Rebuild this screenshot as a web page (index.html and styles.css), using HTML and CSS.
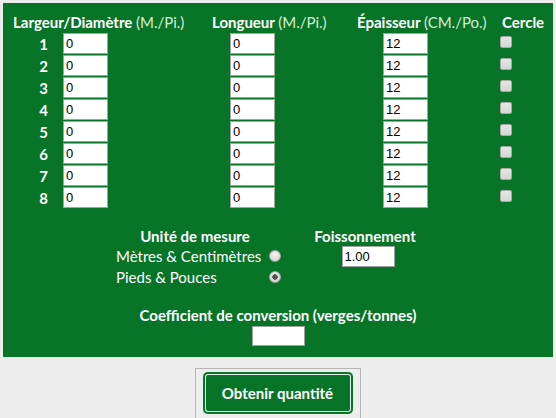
FILE: index.html
```html
<!DOCTYPE html>
<html lang="fr">
<head>
<meta charset="utf-8">
<title>Calcul de quantité</title>
<link rel="stylesheet" href="styles.css">
</head>
<body>
<div class="panel">
  <div class="dims">
    <div class="h h1">Largeur/Diamètre <span class="unit">(M./Pi.)</span></div>
    <div class="h h2">Longueur <span class="unit">(M./Pi.)</span></div>
    <div class="h h3">Épaisseur <span class="unit">(CM./Po.)</span></div>
    <div class="h h4">Cercle</div>

    <div class="num">1</div><div class="c1"><input class="field" value="0"></div><div class="c2"><input class="field" value="0"></div><div class="c3"><input class="field" value="12"></div><div class="c4"><input type="checkbox" class="box"></div>
    <div class="num">2</div><div class="c1"><input class="field" value="0"></div><div class="c2"><input class="field" value="0"></div><div class="c3"><input class="field" value="12"></div><div class="c4"><input type="checkbox" class="box"></div>
    <div class="num">3</div><div class="c1"><input class="field" value="0"></div><div class="c2"><input class="field" value="0"></div><div class="c3"><input class="field" value="12"></div><div class="c4"><input type="checkbox" class="box"></div>
    <div class="num">4</div><div class="c1"><input class="field" value="0"></div><div class="c2"><input class="field" value="0"></div><div class="c3"><input class="field" value="12"></div><div class="c4"><input type="checkbox" class="box"></div>
    <div class="num">5</div><div class="c1"><input class="field" value="0"></div><div class="c2"><input class="field" value="0"></div><div class="c3"><input class="field" value="12"></div><div class="c4"><input type="checkbox" class="box"></div>
    <div class="num">6</div><div class="c1"><input class="field" value="0"></div><div class="c2"><input class="field" value="0"></div><div class="c3"><input class="field" value="12"></div><div class="c4"><input type="checkbox" class="box"></div>
    <div class="num">7</div><div class="c1"><input class="field" value="0"></div><div class="c2"><input class="field" value="0"></div><div class="c3"><input class="field" value="12"></div><div class="c4"><input type="checkbox" class="box"></div>
    <div class="num">8</div><div class="c1"><input class="field" value="0"></div><div class="c2"><input class="field" value="0"></div><div class="c3"><input class="field" value="12"></div><div class="c4"><input type="checkbox" class="box"></div>
  </div>

  <div class="units">
    <div class="uh uh-left">Unité de mesure</div>
    <div class="uh uh-right">Foissonnement</div>
    <div class="opt">Mètres &amp; Centimètres</div>
    <div class="rad"><input type="radio" name="unit" class="radio"></div>
    <div class="fois"><input class="field wide" value="1.00"></div>
    <div class="opt">Pieds &amp; Pouces</div>
    <div class="rad"><input type="radio" name="unit" class="radio" checked></div>
  </div>

  <div class="coef">
    <div class="coef-title">Coefficient de conversion (verges/tonnes)</div>
    <input class="field wide coef-input" value="">
  </div>
</div>

<div class="actions">
  <div class="btn-frame">
    <button class="btn" type="button">Obtenir quantité</button>
  </div>
</div>
</body>
</html>
```

FILE: styles.css
```css
html, body {
  margin: 0;
  padding: 0;
  background: #ededed;
}

body {
  font-family: "Lato", "Open Sans", sans-serif;
  color: #fff;
}

.panel {
  margin: 3px 3px 0 3px;
  background: #077428;
  padding: 9px 0 11px 10px;
}

.dims {
  display: grid;
  grid-template-columns: 48px 151px 145px 140px 56px;
  grid-auto-rows: 22px;
  grid-template-rows: 21px;
}

.h {
  font-size: 15px;
  font-weight: 700;
  line-height: 21px;
  white-space: nowrap;
}

.unit {
  font-weight: 400;
  color: #d6eed6;
}

.h1 { grid-column: 1 / 3; }
.h2 { grid-column: 3; }
.h3 { grid-column: 4; }
.h4 { grid-column: 5; padding-left: 5px; }

.num {
  font-size: 15px;
  font-weight: 700;
  text-align: right;
  padding-right: 13px;
  line-height: 22px;
}

.c1, .c2, .c3, .c4 {
  display: flex;
  align-items: flex-start;
}

.c1 { padding-left: 2px; }
.c2 { padding-left: 18px; }
.c3 { padding-left: 26px; }
.c4 { padding-left: 3px; padding-top: 3px; }

.field {
  box-sizing: border-box;
  width: 45px;
  height: 21px;
  margin: 0;
  padding: 0 2px;
  border: 1px solid #a3a3a3;
  background: #fff;
  font-family: "Liberation Sans", Arial, sans-serif;
  font-size: 13px;
  color: #000;
  outline: none;
}

.field.wide {
  width: 53px;
}

.box {
  appearance: none;
  -webkit-appearance: none;
  box-sizing: border-box;
  width: 12px;
  height: 12px;
  margin: 0;
  border: 1px solid #a8a8a8;
  border-radius: 2px;
  background: linear-gradient(#e6e6e6, #d6d6d6);
}

.units {
  display: grid;
  grid-template-columns: 148px 38px 136px;
  grid-template-rows: 20px 21px 21px;
  margin: 17px 0 0 101px;
}

.uh {
  font-size: 15px;
  font-weight: 700;
  line-height: 20px;
  text-align: center;
  white-space: nowrap;
}

.uh-left { grid-column: 1 / 3; padding-right: 24px; }
.uh-right { grid-column: 3; padding-right: 6px; }

.opt {
  font-size: 15px;
  line-height: 21px;
  padding-left: 2px;
  white-space: nowrap;
}

.rad {
  display: flex;
  align-items: center;
  padding-left: 7px;
}

.fois {
  grid-row: 2;
  grid-column: 3;
  display: flex;
  justify-content: center;
}

.radio {
  appearance: none;
  -webkit-appearance: none;
  box-sizing: border-box;
  width: 12px;
  height: 12px;
  margin: 0 0 1px 0;
  border: 1px solid #a5a5a5;
  border-radius: 50%;
  background: radial-gradient(circle at 50% 35%, #f2f2f2, #cfcfcf);
}

.radio:checked {
  background: radial-gradient(circle, #555 0 2.5px, transparent 3px), radial-gradient(circle at 50% 35%, #f2f2f2, #cfcfcf);
}

.coef {
  display: flex;
  flex-direction: column;
  align-items: center;
  margin: 17px 10px 0 0;
}

.coef-title {
  font-size: 15px;
  font-weight: 700;
  line-height: 20px;
  white-space: nowrap;
}

.coef-input {
  height: 20px;
  margin-top: 1px;
}

.actions {
  display: flex;
  justify-content: center;
  padding-top: 11px;
}

.btn-frame {
  box-sizing: border-box;
  width: 166px;
  border: 1px solid #b5b5b5;
  border-bottom: none;
  padding: 3px 7px 4px 7px;
  margin-left: -1px;
}

.btn {
  display: block;
  width: 150px;
  height: 42px;
  margin: 0;
  border: none;
  border-radius: 5px;
  background: #077428;
  box-shadow: inset 0 0 0 2px #077428, inset 0 0 0 3px #e8f2ea;
  color: #fff;
  font-family: "Lato", "Open Sans", sans-serif;
  font-size: 15px;
  font-weight: 700;
  cursor: pointer;
}
```
